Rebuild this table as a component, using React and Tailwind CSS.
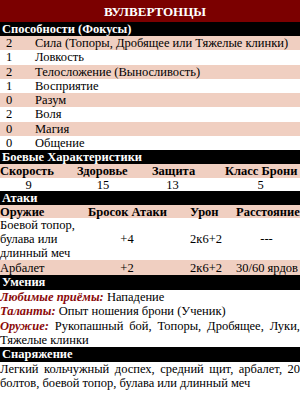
const pink = "bg-[#f0cfc1]";

const abilities = [
  ["2", "Сила (Топоры, Дробящее или Тяжелые клинки)"],
  ["1", "Ловкость"],
  ["2", "Телосложение (Выносливость)"],
  ["1", "Восприятие"],
  ["0", "Разум"],
  ["2", "Воля"],
  ["0", "Магия"],
  ["0", "Общение"],
];

function Bar({ children, className = "" }) {
  return (
    <div className={`bg-black pl-[2px] font-bold text-white ${className}`}>
      {children}
    </div>
  );
}

export default function App() {
  return (
    <div className="w-[300px] h-[396px] overflow-hidden bg-white [font-family:'Liberation_Serif',serif] text-[12.5px] leading-[14px] text-black">
      <div className="flex h-[22px] items-end justify-center bg-[#7b0000] pb-[3px] pl-[10px] text-[13px] font-bold text-white">
        ВУЛВЕРТОНЦЫ
      </div>

      <Bar className="h-[14px]">Способности (Фокусы)</Bar>
      {abilities.map(([n, name], i) => (
        <div
          key={i}
          className={`flex h-[14.25px] items-center ${i % 2 === 0 ? pink : "bg-white"}`}
        >
          <span className="w-[18px] text-center">{n}</span>
          <span className="pl-[17px]">{name}</span>
        </div>
      ))}

      <Bar className="h-[14px]">Боевые Характеристики</Bar>
      <div className={`grid h-[14px] grid-cols-[77px_75px_73px_75px] items-center whitespace-nowrap font-bold ${pink}`}>
        <span>Скорость</span>
        <span>Здоровье</span>
        <span>Защита</span>
        <span>Класс Брони</span>
      </div>
      <div className="grid h-[13px] grid-cols-[77px_75px_73px_75px] items-center">
        <span className="w-[57px] text-center">9</span>
        <span className="w-[52px] text-center">15</span>
        <span className="w-[41px] text-center">13</span>
        <span className="w-[71px] text-center">5</span>
      </div>

      <Bar className="h-[14px]">Атаки</Bar>
      <div className={`grid h-[13px] grid-cols-[88px_102px_46px_64px] items-center whitespace-nowrap font-bold ${pink}`}>
        <span>Оружие</span>
        <span>Бросок Атаки</span>
        <span>Урон</span>
        <span>Расстояние</span>
      </div>
      <div className="grid h-[42px] grid-cols-[88px_102px_46px_64px] items-center">
        <span className="pr-[4px]">Боевой топор, булава или длинный меч</span>
        <span className="w-[78px] text-center">+4</span>
        <span className="w-[32px] text-center">2к6+2</span>
        <span className="w-[61px] text-center">---</span>
      </div>
      <div className={`grid h-[15px] grid-cols-[88px_102px_46px_64px] items-center ${pink}`}>
        <span>Арбалет</span>
        <span className="w-[78px] text-center">+2</span>
        <span className="w-[32px] text-center">2к6+2</span>
        <span className="w-[62px] whitespace-nowrap text-center">30/60 ярдов</span>
      </div>

      <Bar className="h-[15px] leading-[15px]">Умения</Bar>
      <div className="leading-[14.25px]">
        <p>
          <b className="italic text-[#8b0a0a]">Любимые приёмы:</b> Нападение
        </p>
        <p>
          <b className="italic text-[#8b0a0a]">Таланты:</b> Опыт ношения брони (Ученик)
        </p>
        <p className="text-justify">
          <b className="italic text-[#8b0a0a]">Оружие:</b> Рукопашный бой, Топоры, Дробящее, Луки, Тяжелые клинки
        </p>
      </div>

      <Bar className="h-[15px] leading-[15px]">Снаряжение</Bar>
      <p className="text-justify">
        Легкий кольчужный доспех, средний щит, арбалет, 20 болтов, боевой топор, булава или длинный меч
      </p>
    </div>
  );
}
